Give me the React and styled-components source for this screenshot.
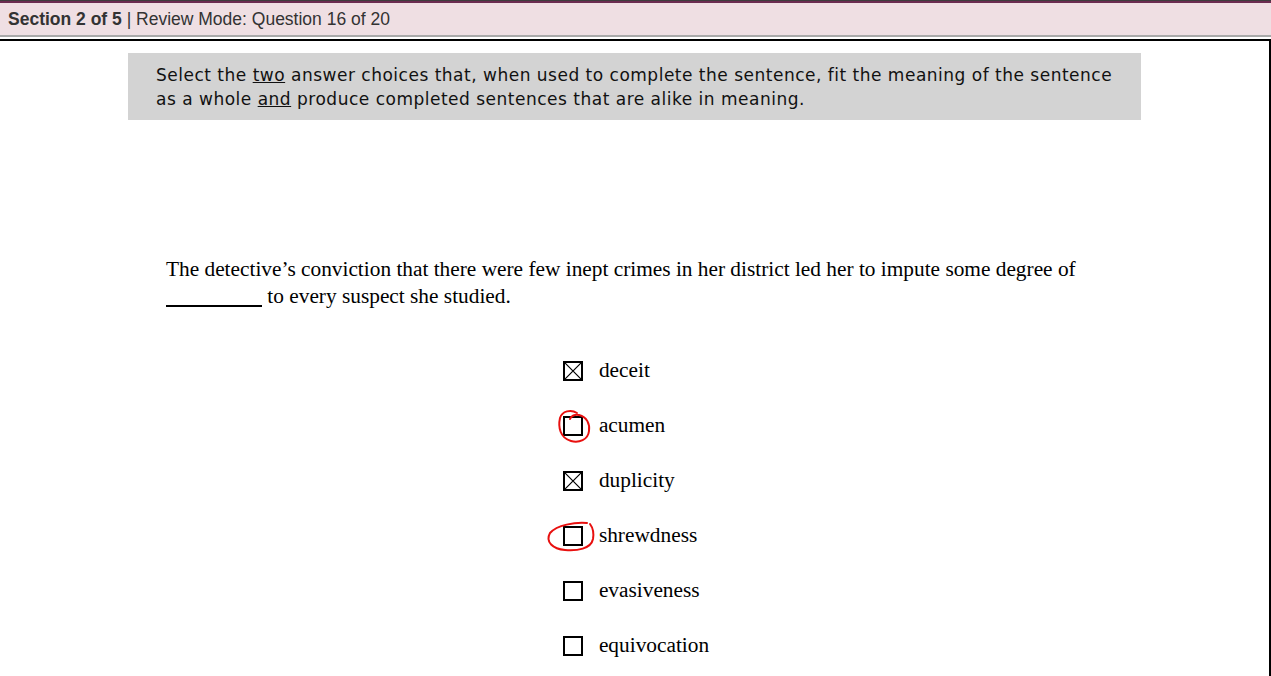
import React from 'react'
import styled, { createGlobalStyle } from 'styled-components'

const GlobalStyle = createGlobalStyle`
  html, body {
    margin: 0;
    padding: 0;
    background: #fff;
    overflow: hidden;
  }
`

const Page = styled.div`
  width: 1271px;
  height: 676px;
  overflow: hidden;
  background: #fff;
`

const TopBar = styled.div`
  height: 31px;
  border-top: 1px solid #3d3d3d;
  box-shadow: inset 0 2px 0 #6b2c50;
  background: #efdfe3;
  border-bottom: 2px solid #a9a9a9;
  display: flex;
  align-items: center;
  padding: 3px 8px 0;
  font-family: "Liberation Sans", Arial, sans-serif;
  font-size: 17.5px;
  color: #333;
  b {
    font-weight: bold;
  }
`

const Panel = styled.div`
  margin-top: 2px;
  border-top: 2px solid #000;
  border-right: 2px solid #000;
  height: 700px;
  box-sizing: border-box;
  padding-top: 12px;
`

const Directions = styled.div`
  width: 1013px;
  margin: 0 auto;
  box-sizing: border-box;
  background: #d3d3d3;
  padding: 10px 20px 9px 28px;
  font-family: "DejaVu Sans", Verdana, sans-serif;
  font-size: 17px;
  letter-spacing: 0.5px;
  line-height: 24px;
  color: #111;
  u {
    text-decoration: underline;
  }
`

const Stem = styled.p`
  margin: 136px 0 0;
  padding: 0 166px;
  font-family: "Liberation Serif", "Times New Roman", serif;
  font-size: 21.33px;
  line-height: 27px;
  color: #000;
`

const Blank = styled.span`
  display: inline-block;
  width: 96px;
  border-bottom: 2px solid #000;
  vertical-align: -4px;
`

const ChoiceArea = styled.div`
  display: flex;
  justify-content: center;
  margin-top: 33px;
  padding-left: 3px;
`

const ChoiceList = styled.div`
  display: flex;
  flex-direction: column;
`

const Choice = styled.div`
  height: 55px;
  display: flex;
  align-items: center;
  gap: 16px;
  font-family: "Liberation Serif", "Times New Roman", serif;
  font-size: 21.33px;
  color: #000;
`

const Box = styled.span`
  position: relative;
  width: 20px;
  height: 20px;
  box-sizing: border-box;
  border: 2px solid #000;
  flex-shrink: 0;
  svg.cross {
    position: absolute;
    inset: 0;
  }
`

const Mark = styled.svg`
  position: absolute;
  left: -22px;
  top: -10px;
  width: 60px;
  height: 46px;
  overflow: visible;
  pointer-events: none;
`

const marks = {
  acumen:
    'M 12 -5 C 6 -9, -3 -7, -5 0 C -7 9, -5 20, 6 23 C 14 25, 23 22, 24 13 C 25 6, 22 -1, 14 -3 C 10 -4, 6 -2, 5 1',
  shrewdness:
    'M 22 -5 C 10 -6, -8 -3, -15 5 C -20 14, -12 21, 0 22 C 12 23, 26 21, 28 11 C 29 5, 28 0, 25 -4',
}

const choices = [
  { label: 'deceit', checked: true },
  { label: 'acumen' },
  { label: 'duplicity', checked: true },
  { label: 'shrewdness' },
  { label: 'evasiveness' },
  { label: 'equivocation' },
]

const App = () => {
  return (
    <Page>
      <GlobalStyle />
      <TopBar>
        <span>
          <b>Section 2 of 5</b> | Review Mode: Question 16 of 20
        </span>
      </TopBar>
      <Panel>
        <Directions>
          Select the <u>two</u> answer choices that, when used to complete the sentence, fit the meaning of the
          sentence as a whole <u>and</u> produce completed sentences that are alike in meaning.
        </Directions>
        <Stem>
          The detective’s conviction that there were few inept crimes in her district led her to impute some
          degree of <Blank /> to every suspect she studied.
        </Stem>
        <ChoiceArea>
          <ChoiceList>
            {choices.map((c) => (
              <Choice key={c.label}>
                <Box>
                  {c.checked && (
                    <svg className="cross" viewBox="0 0 16 16" width="16" height="16">
                      <path d="M0 0 L16 16 M16 0 L0 16" stroke="#000" strokeWidth="1.2" />
                    </svg>
                  )}
                  {marks[c.label] && (
                    <Mark viewBox="-22 -10 60 46">
                      <path d={marks[c.label]} fill="none" stroke="#e8100f" strokeWidth="2" strokeLinecap="round" />
                    </Mark>
                  )}
                </Box>
                {c.label}
              </Choice>
            ))}
          </ChoiceList>
        </ChoiceArea>
      </Panel>
    </Page>
  )
}

export default App
